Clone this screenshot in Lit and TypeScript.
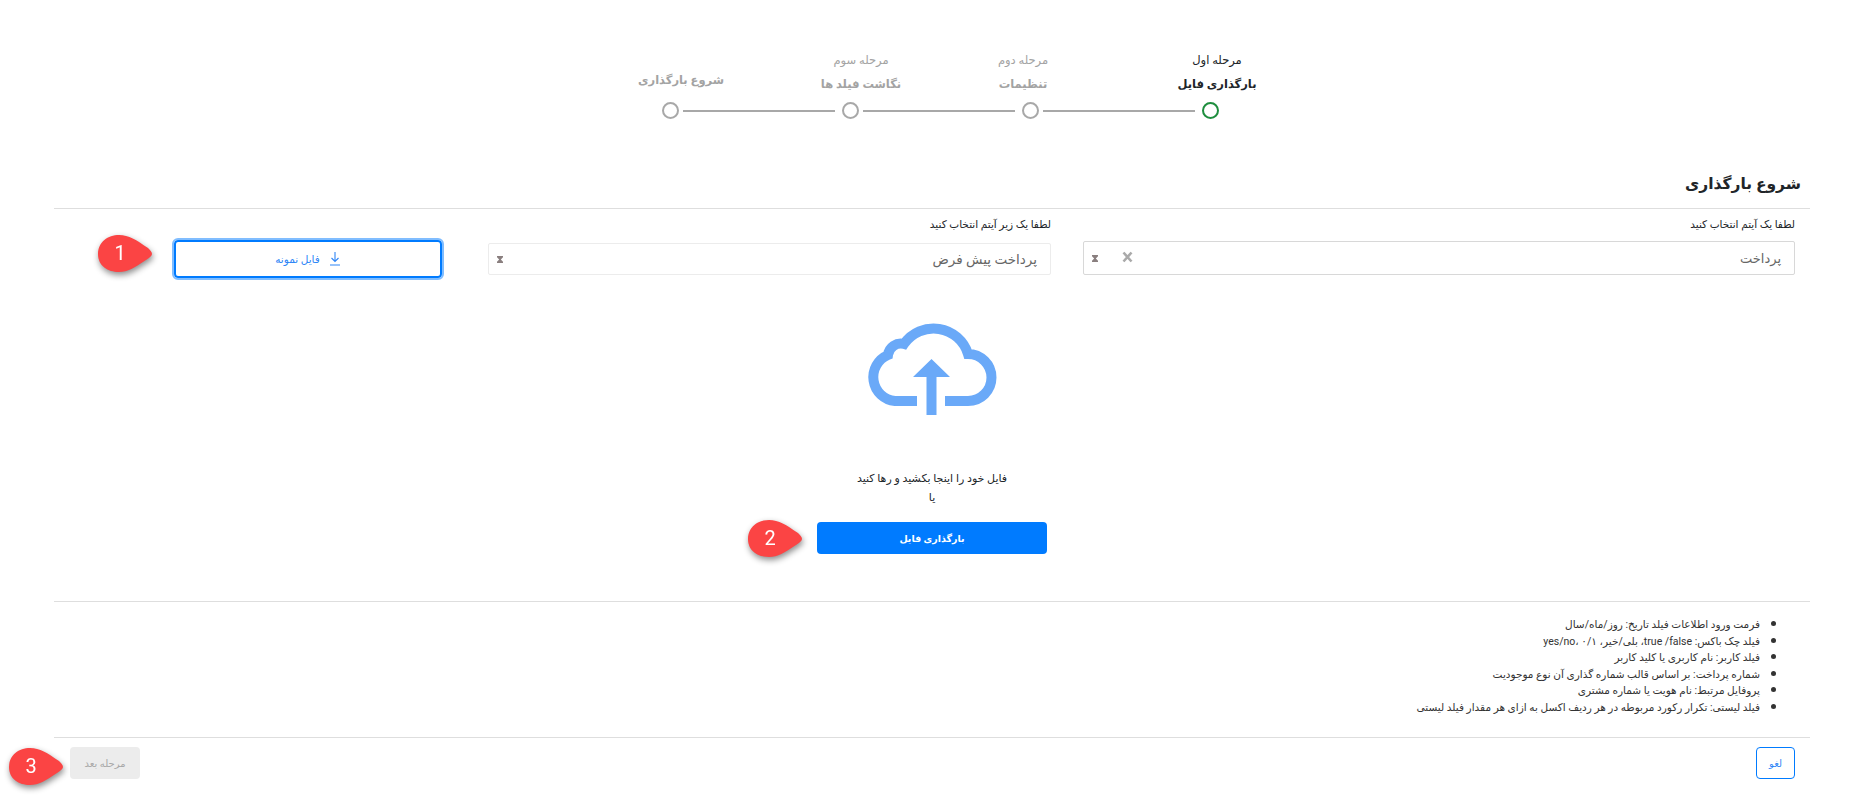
import { LitElement, css, html, svg } from 'lit'
import { customElement } from 'lit/decorators.js'

const steps = [
  { sub: 'مرحله اول', title: 'بارگذاری فایل', shift: 7, rise: 0 },
  { sub: 'مرحله دوم', title: 'تنظیمات', shift: -7, rise: 0 },
  { sub: 'مرحله سوم', title: 'نگاشت فیلد ها', shift: 11, rise: 0 },
  { sub: '', title: 'شروع بارگذاری', shift: 11, rise: 4 },
]

const notes = [
  'فرمت ورود اطلاعات فیلد تاریخ: روز/ماه/سال',
  'فیلد چک باکس: true /false، بلی/خیر، ۰/۱ ،yes/no',
  'فیلد کاربر: نام کاربری یا کلید کاربر',
  'شماره پرداخت: بر اساس قالب شماره گذاری آن نوع موجودیت',
  'پروفایل مرتبط: نام هویت یا شماره مشتری',
  'فیلد لیستی: تکرار رکورد مربوطه در هر ردیف اکسل به ازای هر مقدار فیلد لیستی',
]

const sortIcon = svg`<svg class="sort" width="6" height="7" viewBox="0 0 7 8"><path d="M0 0h7v1.5L4.5 4 7 6.5V8H0V6.5L2.5 4 0 1.5z" fill="#8a7f7f"/></svg>`

@customElement('app-root')
export class AppRoot extends LitElement {
  private badge(n: number, cls: string) {
    return html`
      <svg class="badge ${cls}" width="62" height="46" viewBox="0 0 62 46">
        <path d="M3 21C3 9 13 2 24 2c10 0 17 5 29 13 2 2 4 4 4 6 0 2-3 4-6 6-12 8-18 12-27 12C13 39 3 33 3 21z" fill="#fb4444"/>
        <text x="25" y="27" text-anchor="middle" font-size="20" fill="#fff" font-family="Roboto, sans-serif">${n}</text>
      </svg>
    `
  }

  render() {
    return html`
      <div class="page" dir="rtl">
        <div class="stepper">
          <div class="labels">
            ${steps.map(
              (s, i) => html`
                <div class="step ${i === 0 ? 'active' : ''}" style="transform: translate(${s.shift}px, ${-s.rise}px)">
                  <span class="sub">${s.sub}</span>
                  <strong class="name">${s.title}</strong>
                </div>
              `
            )}
          </div>
          <div class="track">
            <span class="dot active"></span><span class="line"></span>
            <span class="dot"></span><span class="line"></span>
            <span class="dot"></span><span class="line"></span>
            <span class="dot"></span>
          </div>
        </div>

        <h3>شروع بارگذاری</h3>

        <div class="fields">
          <div class="field first">
            <label>لطفا یک آیتم انتخاب کنید</label>
            <div class="select">
              <span>پرداخت</span>
              <svg class="clear" width="11" height="13" viewBox="0 0 11 13">
                <path d="M1.5 2.5l8 9M9.5 2.5l-8 9" stroke="#aaa" stroke-width="2.6" fill="none"/>
              </svg>
              ${sortIcon}
            </div>
          </div>
          <div class="field second">
            <label>لطفا یک زیر آیتم انتخاب کنید</label>
            <div class="select light">
              <span>پرداخت پیش فرض</span>
              ${sortIcon}
            </div>
          </div>
          <div class="sample-wrap">
            <button class="sample">
              <svg width="12" height="14" viewBox="0 0 12 14">
                <path d="M6 0v9M2.5 6L6 9.5 9.5 6M1 13h10" stroke="#2f86f6" stroke-width="1.1" fill="none"/>
              </svg>
              <span>فایل نمونه</span>
            </button>
            ${this.badge(1, 'b1')}
          </div>
        </div>

        <div class="drop">
          <svg class="cloud" width="132" height="96" viewBox="867 323 132 96">
            <path d="M918 404H896A24 24 0 0 1 889 358A13 13 0 0 1 905 347A36 36 0 0 1 969 357A23.5 23.5 0 0 1 969 404H946" fill="none" stroke="#6aa9f8" stroke-width="10"/>
            <path d="M914 380L932.5 362L951 380H937.5V418H927.5V380z" fill="#6aa9f8"/>
          </svg>
          <p class="hint">فایل خود را اینجا بکشید و رها کنید</p>
          <p class="or">یا</p>
          <div class="upload-wrap">
            <button class="upload">بارگذاری فایل</button>
            ${this.badge(2, 'b2')}
          </div>
        </div>

        <ul>
          ${notes.map((n) => html`<li>${n}</li>`)}
        </ul>

        <div class="footer">
          <button class="cancel">لغو</button>
          <button class="next" disabled>مرحله بعد</button>
        </div>
      </div>
      ${this.badge(3, 'b3')}
    `
  }

  static styles = css`
    *,
    *::before,
    *::after {
      box-sizing: border-box;
    }

    :host {
      display: block;
      position: relative;
      height: 800px;
      background: #fff;
      color: #212529;
      font-family: Roboto, 'DejaVu Sans', sans-serif;
      font-size: 11px;
      overflow: hidden;
    }

    .page {
      padding: 52px 54px 0;
    }

    .stepper {
      display: flex;
      flex-direction: column;
      align-items: center;
      padding-left: 16px;
    }

    .labels {
      display: flex;
    }

    .step {
      width: 180px;
      height: 50px;
      display: flex;
      flex-direction: column;
      align-items: center;
      color: #a3a3a3;
    }

    .step.active {
      color: #212529;
    }

    .sub {
      height: 20px;
      line-height: 16px;
      font-size: 11.5px;
    }

    .name {
      line-height: 24px;
      font-size: 11.5px;
    }

    .track {
      display: flex;
      align-items: center;
      height: 17px;
      margin-right: -1px;
    }

    .dot {
      width: 17px;
      height: 17px;
      border: 2px solid #a8a8a8;
      border-radius: 50%;
    }

    .dot.active {
      border-color: #1e8e3e;
    }

    .line {
      width: 152px;
      height: 2px;
      margin: 0 7px 0 4px;
      background: #a8a8a8;
    }

    h3 {
      margin: 53px 0 0;
      padding: 0 9px 12px;
      border-bottom: 1px solid #dedede;
      font-size: 15.5px;
      line-height: 24px;
    }

    .fields {
      display: flex;
      padding: 8px 15px 0;
    }

    .field label {
      display: block;
      height: 24px;
      line-height: 16px;
      font-size: 10.5px;
    }

    .first {
      width: 712px;
      margin-left: 32px;
    }

    .second {
      width: 563px;
      margin-left: 46px;
    }

    .select {
      display: flex;
      align-items: center;
      height: 34px;
      padding: 0 13px 0 8px;
      border: 1px solid #d8d8d8;
      border-radius: 2px;
      color: #666;
      font-size: 13px;
    }

    .select.light {
      height: 32px;
      margin-top: 2px;
      border-color: #ececec;
      font-size: 13.5px;
    }

    .select span {
      flex: 1;
    }

    .clear {
      margin: -4px 0 0 24px;
    }

    .sample-wrap,
    .upload-wrap {
      position: relative;
    }

    .sample-wrap {
      margin-top: 23px;
    }

    button {
      font: inherit;
      border-radius: 4px;
    }

    .sample {
      display: flex;
      align-items: center;
      justify-content: center;
      gap: 9px;
      width: 268px;
      height: 38px;
      border: 2px solid #007bff;
      outline: 2px solid #80bdff;
      outline-offset: 0;
      background: #fff;
      color: #2f86f6;
      font-size: 10.5px;
      direction: rtl;
    }

    .badge {
      position: absolute;
      filter: drop-shadow(1px 3px 3px rgb(0 0 0 / 45%));
    }

    .b1 {
      top: -7px;
      left: -79px;
    }

    .b2 {
      top: 11px;
      left: -72px;
    }

    .b3 {
      top: 746px;
      left: 6px;
    }

    .drop {
      display: flex;
      flex-direction: column;
      align-items: center;
      padding-top: 42px;
    }

    .cloud {
      display: block;
    }

    .hint,
    .or {
      margin: 0;
      line-height: 19px;
    }

    .hint {
      margin-top: 53px;
    }

    .upload {
      width: 230px;
      height: 32px;
      margin-top: 15px;
      border: 0;
      background: #007bff;
      color: #fff;
      font-size: 9.5px;
      font-weight: 700;
    }

    ul {
      margin: 47px 0 0;
      padding: 13px 50px 23px 0;
      border-top: 1px solid #dedede;
      border-bottom: 1px solid #dedede;
      font-size: 10.5px;
      line-height: 16.5px;
      color: #333;
    }

    li {
      height: 16.5px;
    }

    li::marker {
      font-size: 15px;
    }

    .footer {
      display: flex;
      justify-content: space-between;
      padding: 9px 15px 0 0;
    }

    .cancel,
    .next {
      height: 32px;
    }

    .cancel {
      width: 39px;
      border: 1px solid #007bff;
      background: #fff;
      color: #2f86f6;
      font-size: 10px;
    }

    .next {
      width: 70px;
      margin-left: 16px;
      border: 0;
      background: #ececec;
      color: #a8a8a8;
      font-size: 10px;
    }
  `
}

declare global {
  interface HTMLElementTagNameMap {
    'app-root': AppRoot
  }
}
